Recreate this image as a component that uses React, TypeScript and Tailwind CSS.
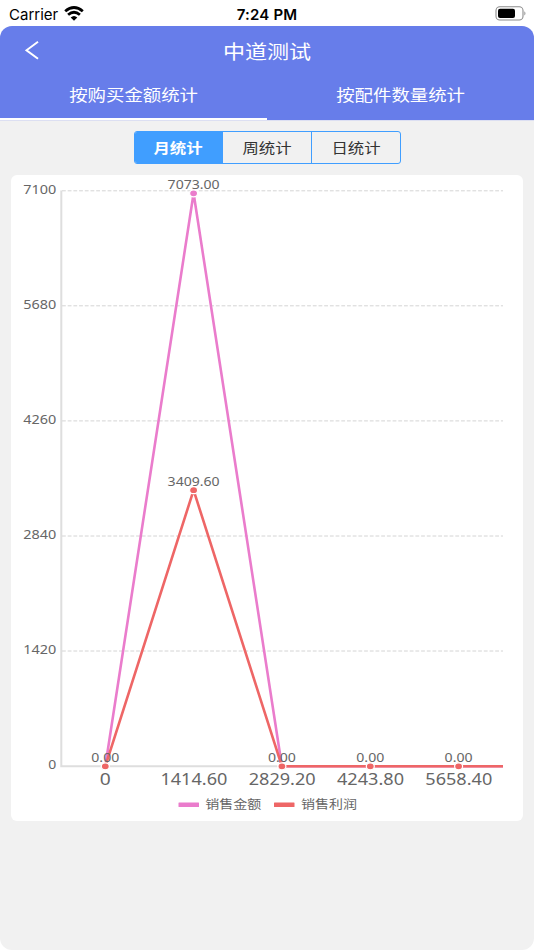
import { Fragment } from "react";

const periods = ["月统计", "周统计", "日统计"];
const tabs = ["按购买金额统计", "按配件数量统计"];

const yTicks = [
  { label: "7100", y: 190.8 },
  { label: "5680", y: 305.8 },
  { label: "4260", y: 420.9 },
  { label: "2840", y: 536 },
  { label: "1420", y: 651 },
  { label: "0", y: 766.3 },
];

const xTicks = [
  { label: "0", x: 105.3, width: 11 },
  { label: "1414.60", x: 193.9, width: 67 },
  { label: "2829.20", x: 282.2, width: 67 },
  { label: "4243.80", x: 370.5, width: 67 },
  { label: "5658.40", x: 458.8, width: 67 },
];

const sales = [
  { x: 105.3, y: 766.3, label: "0.00" },
  { x: 193.6, y: 193.3, label: "7073.00" },
  { x: 281.9, y: 766.3, label: "0.00" },
  { x: 370.3, y: 766.3, label: "0.00" },
  { x: 458.6, y: 766.3, label: "0.00" },
];

const profit = [
  { x: 105.3, y: 766.3, label: "0.00" },
  { x: 193.6, y: 490.2, label: "3409.60" },
  { x: 281.9, y: 766.3, label: "0.00" },
  { x: 370.3, y: 766.3, label: "0.00" },
  { x: 458.6, y: 766.3, label: "0.00" },
];

// both series share the zero points, so label those only once
const labels = [...sales.filter((p) => p.label !== "0.00"), ...profit];

function Series({ data, color }: { data: typeof sales; color: string }) {
  const points = data.map((p) => `${p.x},${p.y}`).join(" ") + " 503,766.3";
  return (
    <g>
      <polyline points={points} fill="none" stroke={color} strokeWidth="2.6" strokeLinejoin="bevel" />
      {data.map((p) => (
        <ellipse key={p.x} cx={p.x} cy={p.y} rx="4" ry="3.5" fill={color} stroke="#fff" strokeWidth="1.2" />
      ))}
    </g>
  );
}

function Chart() {
  return (
    <svg className="block h-[646px] w-[512px] font-['Noto_Sans','Noto_Sans_CJK_SC',sans-serif]" viewBox="11 175 512 646">
      {yTicks.map((t) => (
        <Fragment key={t.label}>
          {t.label !== "0" && (
            <line x1="62" x2="503" y1={t.y} y2={t.y} stroke="#d4d4d4" strokeWidth="1" strokeDasharray="3.8 1.9" />
          )}
          <text
            x="56.3"
            y={t.y + 2.9}
            textAnchor="end"
            fontSize="12"
            fill="#666"
            textLength={t.label === "0" ? 8 : 33}
            lengthAdjust="spacingAndGlyphs"
          >
            {t.label}
          </text>
        </Fragment>
      ))}
      <path d="M61.3 190.5V766.3H503" fill="none" stroke="#dedede" strokeWidth="2" />

      <Series data={sales} color="#ea7ccc" />
      <Series data={profit} color="#ee6666" />

      {labels.map((p, i) => (
        <text
          key={i}
          x={p.x}
          y={p.y - 4}
          textAnchor="middle"
          fontSize="12"
          fill="#666"
          textLength={p.label.length > 4 ? 52 : 28}
          lengthAdjust="spacingAndGlyphs"
        >
          {p.label}
        </text>
      ))}

      {xTicks.map((t) => (
        <text
          key={t.label}
          x={t.x}
          y="784.6"
          textAnchor="middle"
          fontSize="15.5"
          fill="#666"
          textLength={t.width}
          lengthAdjust="spacingAndGlyphs"
        >
          {t.label}
        </text>
      ))}

      <rect x="178.5" y="802.5" width="20.5" height="4.6" rx="0.5" fill="#ea7ccc" />
      <text x="205.3" y="808.6" fontSize="12" fill="#666" textLength="56" lengthAdjust="spacingAndGlyphs">
        销售金额
      </text>
      <rect x="274" y="802.5" width="20.5" height="4.6" rx="0.5" fill="#ee6666" />
      <text x="301" y="808.6" fontSize="12" fill="#666" textLength="56" lengthAdjust="spacingAndGlyphs">
        销售利润
      </text>
    </svg>
  );
}

function StatusBar() {
  return (
    <div className="grid h-[26px] grid-cols-3 items-center pr-[7px] pl-[9px] font-['Inter',sans-serif] text-[15px] leading-none text-black">
      <div className="flex items-center gap-[6px]">
        <span className="pt-0.5">Carrier</span>
        <svg className="h-[15px] w-5" viewBox="0 0 20 15" fill="none" stroke="#000" strokeWidth="2.8">
          <path d="M1.2 5.3Q10-2.3 18.8 5.3" />
          <path d="M4.1 8.7Q10 3.7 15.9 8.7" />
          <path d="M6.7 11.5Q10 8.4 13.3 11.5L10 14.7Z" fill="#000" stroke="none" />
        </svg>
      </div>
      <span className="-ml-0.5 pt-0.5 text-center font-semibold tracking-[0.2px]">7:24 PM</span>
      <svg className="h-[15px] w-8 justify-self-end" viewBox="0 0 32 15">
        <rect x="1" y="0.8" width="27" height="13.2" rx="3.8" fill="none" stroke="#8c8c8c" strokeWidth="1.1" />
        <rect x="3" y="2.7" width="17" height="9.4" rx="2" fill="#000" />
        <path d="M29.4 5.2Q31.5 7.4 29.4 9.6Z" fill="#8c8c8c" />
      </svg>
    </div>
  );
}

export default function App() {
  return (
    <div className="flex h-[950px] w-[534px] flex-col overflow-hidden bg-white font-['Noto_Sans_CJK_SC',sans-serif]">
      <StatusBar />
      <div className="flex flex-1 flex-col overflow-hidden rounded-xl bg-[#f1f1f1]">
        <header className="h-[94px] bg-[#677dea] text-white">
          <div className="grid h-12 grid-cols-[60px_1fr_60px] items-center">
            <svg className="ml-[25px] h-[19px] w-[14px]" viewBox="0 0 14 19" fill="none" stroke="#fff" strokeWidth="2">
              <path d="M13 0.8L1.5 9.3L13 17.8" />
            </svg>
            <h1 className="origin-center scale-x-[1.16] pt-px text-center text-[19px] leading-none">中道测试</h1>
          </div>
          <div className="grid h-[46px] grid-cols-2">
            {tabs.map((tab, i) => (
              <div
                key={tab}
                className={
                  i === 0
                    ? "flex justify-center border-b-2 border-white pt-3"
                    : "flex justify-center border-b-2 border-transparent pt-3"
                }
              >
                <span className="h-4 origin-center scale-x-[1.18] text-[15.6px] leading-4">{tab}</span>
              </div>
            ))}
          </div>
        </header>
        <div className="h-px bg-[#dcdff2]" />

        <div className="mx-auto mt-[10px] flex h-[33px] w-[267px] overflow-hidden rounded-[3px] border border-[#409eff]">
          {periods.map((p, i) => (
            <button
              key={p}
              className={
                i === 0
                  ? "flex flex-1 items-center justify-center bg-[#409eff] text-sm font-bold text-white"
                  : "flex flex-1 items-center justify-center border-l border-[#409eff] text-sm text-[#333]"
              }
            >
              <span className="scale-x-[1.17] pb-0.5">{p}</span>
            </button>
          ))}
        </div>

        <div className="mx-[11px] mt-[11px] h-[646px] overflow-hidden rounded-md bg-white">
          <Chart />
        </div>
      </div>
    </div>
  );
}
